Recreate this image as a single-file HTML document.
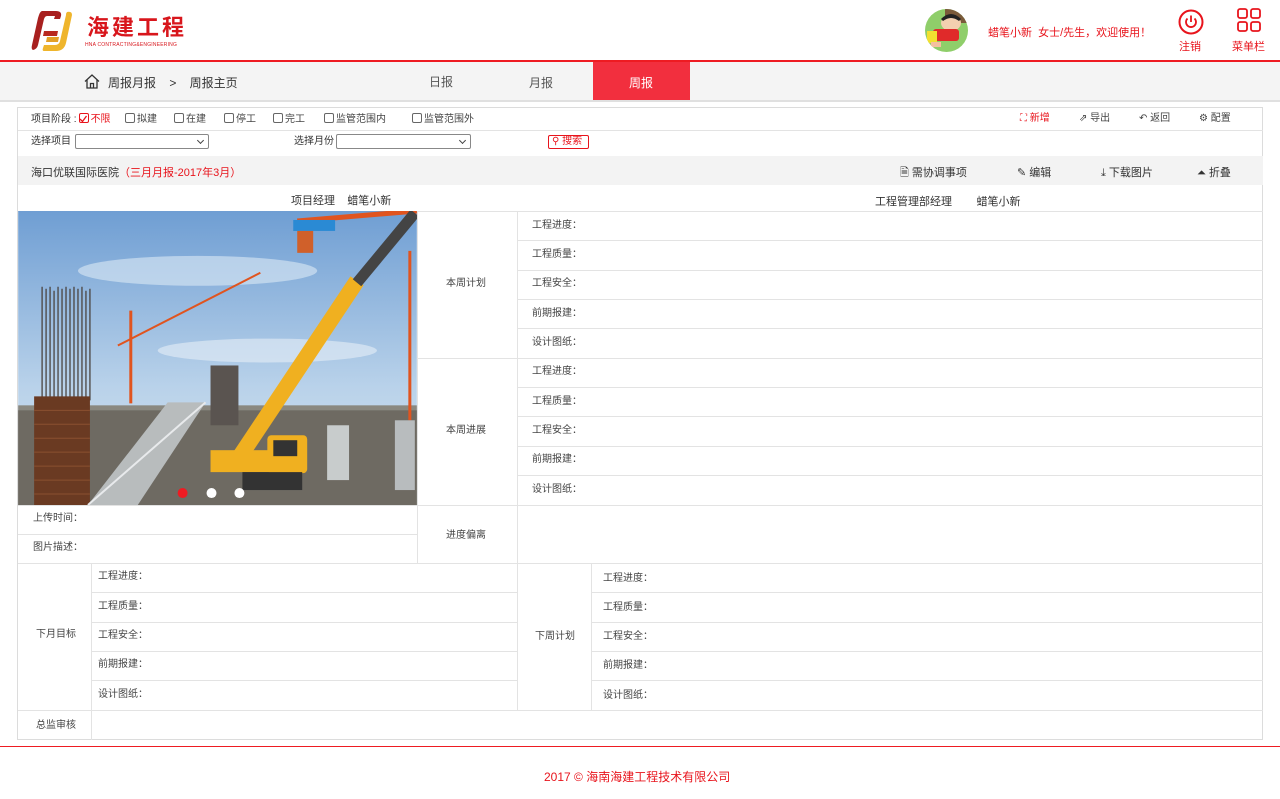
<!DOCTYPE html>
<html><head><meta charset="utf-8"><style>
*{margin:0;padding:0;box-sizing:border-box}
body{width:1280px;height:799px;background:#fff;font-family:"Liberation Sans","Noto Sans CJK SC",sans-serif;position:relative;overflow:hidden;color:#333}
.a{position:absolute;white-space:nowrap}
.h{position:absolute;height:1px;background:#e3e3e3}
.v{position:absolute;width:1px;background:#e3e3e3}
.t{position:absolute;font-size:10px;color:#444;white-space:nowrap;line-height:12px}
.red{color:#e8141c}
.cb{display:inline-block;width:10px;height:10px;border:1px solid #666;border-radius:2px;vertical-align:-1px;margin-right:2px}
.sel{position:absolute;height:15px;border:1px solid #888;border-radius:2px;background:#fff}
.sel:after{content:"";position:absolute;right:5px;top:3px;width:4px;height:4px;border-right:1px solid #444;border-bottom:1px solid #444;transform:rotate(45deg)}
</style></head><body>
<!-- header -->
<svg class="a" style="left:30px;top:9px" width="52" height="44" viewBox="0 0 52 44">
<path d="M12 2 H26 Q32 2 31 7 L30 10 H24 L25 7 H17 Q15 7 14 10 L8 36 Q7 40 3 41 Q1 40 2 36 L8 9 Q10 2 12 2 Z" fill="#a8201f"/>
<path d="M14 22 H28 L27 27 H13 Z" fill="#b8281f"/>
<path d="M37 3 Q42 2 42 6 L36 34 Q34 42 26 42 H14 Q12 42 13 39 L14 36 H25 Q29 36 30 32 L36 6 Q36 4 37 3 Z" fill="#efb52c"/>
<path d="M17 28 H29 L28 33 H16 Z" fill="#e3a027"/>
</svg>
<div class="a" style="left:87px;top:15px;font-size:22px;font-weight:bold;color:#d8161c;letter-spacing:3px;line-height:26px">海建工程</div>
<div class="a" style="left:85px;top:42px;font-size:5px;color:#d8161c;letter-spacing:0.2px">HNA CONTRACTING&amp;ENGINEERING</div>
<svg class="a" style="left:925px;top:9px" width="43" height="43" viewBox="0 0 43 43">
<defs><clipPath id="c"><circle cx="21.5" cy="21.5" r="21.5"/></clipPath></defs>
<g clip-path="url(#c)"><rect width="43" height="43" fill="#8fce6a"/><rect x="20" y="0" width="23" height="14" fill="#7a5a3a"/>
<ellipse cx="26" cy="14" rx="10" ry="8" fill="#f3d0b0"/><path d="M16 10 Q26 0 36 10 L34 12 Q26 6 18 12Z" fill="#222"/>
<rect x="8" y="20" width="26" height="12" rx="3" fill="#e02a2a"/><rect x="2" y="22" width="10" height="12" fill="#f2e030"/><rect x="6" y="33" width="10" height="5" fill="#f3c0a0"/></g></svg>
<div class="a" style="left:988px;top:24px;font-size:11px;color:#e8141c">蜡笔小新&nbsp;&nbsp;女士/先生，欢迎使用！</div>
<svg class="a" style="left:1178px;top:9px" width="26" height="26" viewBox="0 0 26 26"><circle cx="13" cy="13" r="11.5" fill="none" stroke="#e8141c" stroke-width="2"/><path d="M9.5 9.5 A5 5 0 1 0 16.5 9.5" fill="none" stroke="#e8141c" stroke-width="1.8"/><path d="M13 6.5 V13" stroke="#e8141c" stroke-width="1.8"/></svg>
<div class="a" style="left:1179px;top:38px;font-size:11px;color:#e8141c">注销</div>
<svg class="a" style="left:1237px;top:8px" width="24" height="24" viewBox="0 0 24 24" fill="none" stroke="#e8141c" stroke-width="1.8"><rect x="1" y="1" width="9" height="9" rx="2"/><rect x="14" y="1" width="9" height="9" rx="2"/><rect x="1" y="14" width="9" height="9" rx="2"/><rect x="14" y="14" width="9" height="9" rx="2"/></svg>
<div class="a" style="left:1232px;top:38px;font-size:11px;color:#e8141c">菜单栏</div>
<div class="a" style="left:0;top:60px;width:1280px;height:2px;background:#ee1b22"></div>
<!-- nav -->
<div class="a" style="left:0;top:62px;width:1280px;height:38px;background:#f4f4f4"></div>
<div class="a" style="left:0;top:100px;width:1280px;height:2px;background:#e0e0e0"></div>
<svg class="a" style="left:84px;top:74px" width="16" height="15" viewBox="0 0 16 15" fill="none" stroke="#333" stroke-width="1.3"><path d="M1 7.5 L8 1 L15 7.5"/><path d="M3 6 V14 H13 V6"/><path d="M6.5 14 V9.5 H9.5 V14"/></svg>
<div class="a" style="left:108px;top:74px;font-size:12px;color:#333">周报月报&nbsp;&nbsp;&nbsp;&nbsp;&gt;&nbsp;&nbsp;&nbsp;&nbsp;周报主页</div>
<div class="a" style="left:429px;top:73px;font-size:12px;color:#555">日报</div>
<div class="a" style="left:529px;top:74px;font-size:12px;color:#555">月报</div>
<div class="a" style="left:593px;top:62px;width:97px;height:38px;background:#f22f3e"></div>
<div class="a" style="left:629px;top:74px;font-size:12px;color:#fff">周报</div>
<!-- container -->
<div class="a" style="left:17px;top:107px;width:1246px;height:633px;border:1px solid #dcdcdc"></div>
<div class="t" style="left:31px;top:113px;color:#333">项目阶段 :<span class="cb" style="border-color:#e8141c;margin-left:2px;position:relative"></span><span class="red">不限</span></div>
<div class="t" style="left:125px;top:113px"><span class="cb"></span>拟建</div>
<div class="t" style="left:174px;top:113px"><span class="cb"></span>在建</div>
<div class="t" style="left:224px;top:113px"><span class="cb"></span>停工</div>
<div class="t" style="left:273px;top:113px"><span class="cb"></span>完工</div>
<div class="t" style="left:324px;top:113px"><span class="cb"></span>监管范围内</div>
<div class="t" style="left:412px;top:113px"><span class="cb"></span>监管范围外</div>
<svg class="a" style="left:78px;top:114px" width="10" height="10" viewBox="0 0 10 10"><path d="M2 5 L4.5 7.5 L8.5 2" fill="none" stroke="#e8141c" stroke-width="1.3"/></svg>
<div class="t red" style="left:1020px;top:113px">⛶ 新增</div>
<div class="t" style="left:1079px;top:113px">⇗ 导出</div>
<div class="t" style="left:1139px;top:113px">↶ 返回</div>
<div class="t" style="left:1199px;top:113px">⚙ 配置</div>
<div class="h" style="left:18px;top:130px;width:1245px"></div>
<div class="t" style="left:31px;top:136px;color:#333">选择项目</div>
<div class="sel" style="left:75px;top:134px;width:134px"></div>
<div class="t" style="left:294px;top:136px;color:#333">选择月份</div>
<div class="sel" style="left:336px;top:134px;width:135px"></div>
<div class="a" style="left:548px;top:135px;width:41px;height:14px;border:1px solid #e8141c;border-radius:2px;font-size:10px;color:#e8141c;line-height:12px;padding-left:3px">⚲ 搜索</div>
<div class="a" style="left:18px;top:156px;width:1245px;height:29px;background:#f3f3f3"></div>
<div class="a" style="left:31px;top:164px;font-size:11px;color:#333">海口优联国际医院<span class="red">（三月月报-2017年3月）</span></div>
<div class="a" style="left:900px;top:164px;font-size:11px;color:#333">🗎 需协调事项</div>
<div class="a" style="left:1017px;top:164px;font-size:11px;color:#333">✎ 编辑</div>
<div class="a" style="left:1101px;top:164px;font-size:11px;color:#333">⤓ 下载图片</div>
<div class="a" style="left:1197px;top:164px;font-size:11px;color:#333">⏶ 折叠</div>
<div class="a" style="left:291px;top:192px;font-size:11px;color:#333">项目经理&nbsp;&nbsp;&nbsp;&nbsp;蜡笔小新</div>
<div class="a" style="left:875px;top:193px;font-size:11px;color:#333">工程管理部经理&nbsp;&nbsp;&nbsp;&nbsp;&nbsp;&nbsp;&nbsp;&nbsp;蜡笔小新</div>
<div class="h" style="left:18px;top:211px;width:1245px"></div>
<!-- image -->
<svg class="a" style="left:18px;top:211px" width="399" height="294" viewBox="0 0 400 295">
<defs><linearGradient id="s" x1="0" y1="0" x2="0" y2="1"><stop offset="0" stop-color="#6f9ed3"/><stop offset="0.6" stop-color="#b9d2ea"/><stop offset="1" stop-color="#d8e4ef"/></linearGradient></defs>
<rect width="400" height="295" fill="url(#s)"/>
<ellipse cx="180" cy="60" rx="120" ry="15" fill="#dce9f5" opacity="0.6"/><ellipse cx="250" cy="140" rx="110" ry="12" fill="#e6eef7" opacity="0.6"/>
<rect x="0" y="195" width="400" height="100" fill="#8a8880"/>
<rect x="0" y="200" width="400" height="95" fill="#6e6a62"/>
<g stroke="#4a4440" stroke-width="1.3"><path d="M24 76V190M28 78V190M32 76V190M36 80V190M40 76V190M44 78V190M48 76V190M52 78V190M56 76V190M60 78V190M64 76V190M68 80V190M72 78V190"/></g>
<rect x="16" y="186" width="56" height="109" fill="#6a3a22"/>
<g stroke="#8a5030" stroke-width="1"><path d="M16 200H72M16 214H72M16 228H72M16 242H72M16 256H72M16 270H72M16 284H72"/></g>
<path d="M70 295 L120 295 L188 192 L150 192 Z" fill="#b8bcbd"/>
<path d="M70 295 L188 192" stroke="#e8eaec" stroke-width="2"/>
<rect x="193" y="155" width="28" height="60" fill="#5a5450"/>
<g stroke="#e0541f" stroke-width="3"><path d="M113 100V193"/><path d="M393 40V210"/></g>
<path d="M100 135 L243 62" stroke="#e0541f" stroke-width="2"/>
<path d="M280 10 L400 0" stroke="#e0541f" stroke-width="5"/><rect x="276" y="9" width="42" height="11" fill="#2a8ad4"/><rect x="280" y="20" width="16" height="22" fill="#d0602a"/>
<path d="M220 250 L340 70" stroke="#f0b020" stroke-width="16"/>
<path d="M340 72 L398 2" stroke="#444" stroke-width="11"/>
<rect x="193" y="240" width="95" height="22" fill="#f0b020"/>
<rect x="250" y="225" width="40" height="38" rx="4" fill="#f0b020"/><rect x="256" y="230" width="24" height="16" fill="#333"/>
<rect x="225" y="262" width="60" height="18" fill="#333"/>
<rect x="310" y="215" width="22" height="55" fill="#c8cccc"/><rect x="378" y="210" width="20" height="70" fill="#b8bcbe"/>
<circle cx="165" cy="283" r="5" fill="#ee1b22"/><circle cx="194" cy="283" r="5" fill="#fff"/><circle cx="222" cy="283" r="5" fill="#fff"/>
</svg>
<!-- grid lines -->
<div class="v" style="left:417px;top:211px;height:352px"></div>
<div class="v" style="left:517px;top:211px;height:499px"></div>
<div class="h" style="left:517px;top:240px;width:746px"></div>
<div class="h" style="left:517px;top:270px;width:746px"></div>
<div class="h" style="left:517px;top:299px;width:746px"></div>
<div class="h" style="left:517px;top:328px;width:746px"></div>
<div class="h" style="left:417px;top:358px;width:846px"></div>
<div class="h" style="left:517px;top:387px;width:746px"></div>
<div class="h" style="left:517px;top:416px;width:746px"></div>
<div class="h" style="left:517px;top:446px;width:746px"></div>
<div class="h" style="left:517px;top:475px;width:746px"></div>
<div class="h" style="left:18px;top:505px;width:1245px"></div>
<div class="h" style="left:18px;top:534px;width:399px"></div>
<div class="h" style="left:18px;top:563px;width:1245px"></div>
<div class="v" style="left:91px;top:563px;height:177px"></div>
<div class="v" style="left:591px;top:563px;height:147px"></div>
<div class="h" style="left:91px;top:592px;width:426px"></div><div class="h" style="left:591px;top:592px;width:672px"></div>
<div class="h" style="left:91px;top:622px;width:426px"></div><div class="h" style="left:591px;top:622px;width:672px"></div>
<div class="h" style="left:91px;top:651px;width:426px"></div><div class="h" style="left:591px;top:651px;width:672px"></div>
<div class="h" style="left:91px;top:680px;width:426px"></div><div class="h" style="left:591px;top:680px;width:672px"></div>
<div class="h" style="left:18px;top:710px;width:1245px"></div>
<!-- labels -->
<div class="t" style="left:446px;top:278px">本周计划</div>
<div class="t" style="left:446px;top:425px">本周进展</div>
<div class="t" style="left:446px;top:530px">进度偏离</div>
<div class="t" style="left:532px;top:220px">工程进度：</div>
<div class="t" style="left:532px;top:249px">工程质量：</div>
<div class="t" style="left:532px;top:278px">工程安全：</div>
<div class="t" style="left:532px;top:308px">前期报建：</div>
<div class="t" style="left:532px;top:337px">设计图纸：</div>
<div class="t" style="left:532px;top:366px">工程进度：</div>
<div class="t" style="left:532px;top:396px">工程质量：</div>
<div class="t" style="left:532px;top:425px">工程安全：</div>
<div class="t" style="left:532px;top:454px">前期报建：</div>
<div class="t" style="left:532px;top:484px">设计图纸：</div>
<div class="t" style="left:33px;top:513px">上传时间：</div>
<div class="t" style="left:33px;top:542px">图片描述：</div>
<div class="t" style="left:36px;top:629px">下月目标</div>
<div class="t" style="left:535px;top:631px">下周计划</div>
<div class="t" style="left:36px;top:720px">总监审核</div>
<div class="t" style="left:98px;top:571px">工程进度：</div>
<div class="t" style="left:98px;top:601px">工程质量：</div>
<div class="t" style="left:98px;top:630px">工程安全：</div>
<div class="t" style="left:98px;top:659px">前期报建：</div>
<div class="t" style="left:98px;top:689px">设计图纸：</div>
<div class="t" style="left:603px;top:573px">工程进度：</div>
<div class="t" style="left:603px;top:602px">工程质量：</div>
<div class="t" style="left:603px;top:631px">工程安全：</div>
<div class="t" style="left:603px;top:660px">前期报建：</div>
<div class="t" style="left:603px;top:690px">设计图纸：</div>
<!-- footer -->
<div class="a" style="left:0;top:746px;width:1280px;height:1px;background:#ee1b22"></div>
<div class="a" style="left:544px;top:768px;font-size:12px;color:#e8141c">2017 © 海南海建工程技术有限公司</div>
</body></html>
